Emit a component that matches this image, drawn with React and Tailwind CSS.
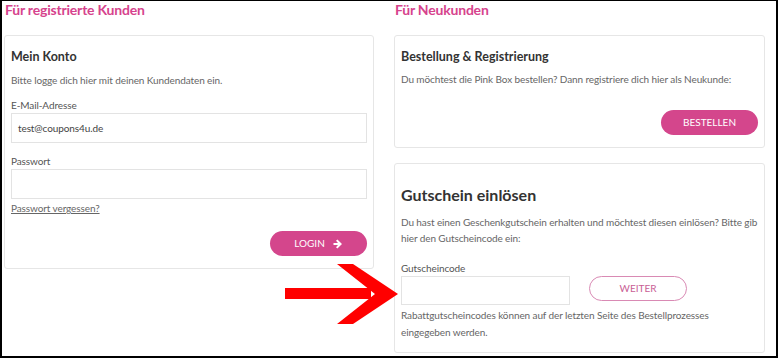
export default function App() {
  const font = { fontFamily: "Lato, 'Noto Sans', sans-serif" };
  const small = "text-[10px] tracking-[-0.1px]";
  return (
    <div
      className="relative w-[778px] h-[358px] bg-white border-black border-l-2 border-t border-r-2 border-b-2 overflow-hidden text-[#333]"
      style={font}
    >
      <div className="flex pl-[2px] gap-[20px]">
        {/* Left column */}
        <div className="w-[370px] flex flex-col">
          <h2 className="h-[20px] leading-[20px] text-[14px] tracking-[-0.2px] font-bold text-[#d6438d] -mt-[1px] pl-[1px]">Für registrierte Kunden</h2>
          <div className="mt-[15px] border border-[#e6e6e6] rounded-[3px] px-[6px] pt-[11px] pb-[12px] flex flex-col">
            <div className="text-[12.5px] leading-[20px] font-bold text-[#333]">Mein Konto</div>
            <div className={`mt-[5px] ${small} leading-[16px] text-[#666]`}>Bitte logge dich hier mit deinen Kundendaten ein.</div>
            <div className={`mt-[9px] ${small} leading-[16px] text-[#555]`}>E-Mail-Adresse</div>
            <div className={`h-[30px] border border-[#e3e3e3] flex items-center px-[6px] ${small} text-[#444]`}>test@coupons4u.de</div>
            <div className={`mt-[10px] ${small} leading-[16px] text-[#555]`}>Passwort</div>
            <div className="h-[30px] border border-[#e3e3e3]"></div>
            <a className={`mt-[1px] ${small} leading-[16px] text-[#666] underline self-start`}>Passwort vergessen?</a>
            <div className="mt-[15px] flex justify-end">
              <button className="w-[97px] h-[25px] rounded-full bg-[#d4468c] text-white text-[10px] flex items-center justify-center gap-[8px]">
                <span>LOGIN</span>
                <svg width="10" height="10" viewBox="0 0 10 10">
                  <path d="M0.5 4 H5 L3 1.8 L4.4 0.6 L9 5 L4.4 9.4 L3 8.2 L5 6 H0.5 Z" fill="white" />
                </svg>
              </button>
            </div>
          </div>
        </div>
        {/* Right column */}
        <div className="w-[371px] flex flex-col">
          <h2 className="h-[20px] leading-[20px] text-[14px] tracking-[-0.2px] font-bold text-[#d6438d] -mt-[1px] pl-[1px]">Für Neukunden</h2>
          <div className="mt-[15px] border border-[#e6e6e6] rounded-[3px] px-[6px] pt-[11px] pb-[12px] flex flex-col">
            <div className="text-[12.5px] leading-[20px] font-bold text-[#333]">Bestellung &amp; Registrierung</div>
            <div className={`mt-[4px] ${small} leading-[16px] text-[#666] whitespace-nowrap`}>Du möchtest die Pink Box bestellen? Dann registriere dich hier als Neukunde:</div>
            <div className="mt-[23px] flex justify-end">
              <button className="w-[97px] h-[25px] rounded-full bg-[#d4468c] text-white text-[10px] flex items-center justify-center">BESTELLEN</button>
            </div>
          </div>
          <div className="mt-[15px] border border-[#e6e6e6] rounded-[3px] px-[6px] pt-[18px] pb-[11px] flex flex-col">
            <div className="text-[16px] leading-[26px] font-bold text-[#333]">Gutschein einlösen</div>
            <div className={`mt-[6px] ${small} leading-[16px] text-[#666] whitespace-nowrap`}>
              Du hast einen Geschenkgutschein erhalten und möchtest diesen einlösen? Bitte gib<br />hier den Gutscheincode ein:
            </div>
            <div className={`mt-[14px] ${small} leading-[16px] text-[#555]`}>Gutscheincode</div>
            <div className="flex items-start gap-[19px]">
              <div className="w-[169px] h-[29px] border border-[#e3e3e3]"></div>
              <button className="w-[98px] h-[25px] rounded-full border border-[#d98ab4] text-[#c95e95] text-[10px] flex items-center justify-center">WEITER</button>
            </div>
            <div className={`mt-[2px] ${small} leading-[17px] text-[#666] whitespace-nowrap`}>
              Rabattgutscheincodes können auf der letzten Seite des Bestellprozesses<br />eingegeben werden.
            </div>
          </div>
        </div>
      </div>
      {/* red annotation arrow */}
      <svg className="absolute left-[281px] top-[262px]" width="120" height="62" viewBox="0 0 120 62">
        <polygon points="2,25 88,25 88,36 2,36" fill="#ff0000" />
        <polygon points="54,1 70,1 115,31 70,61 54,61 92,31" fill="#ff0000" />
      </svg>
    </div>
  );
}
